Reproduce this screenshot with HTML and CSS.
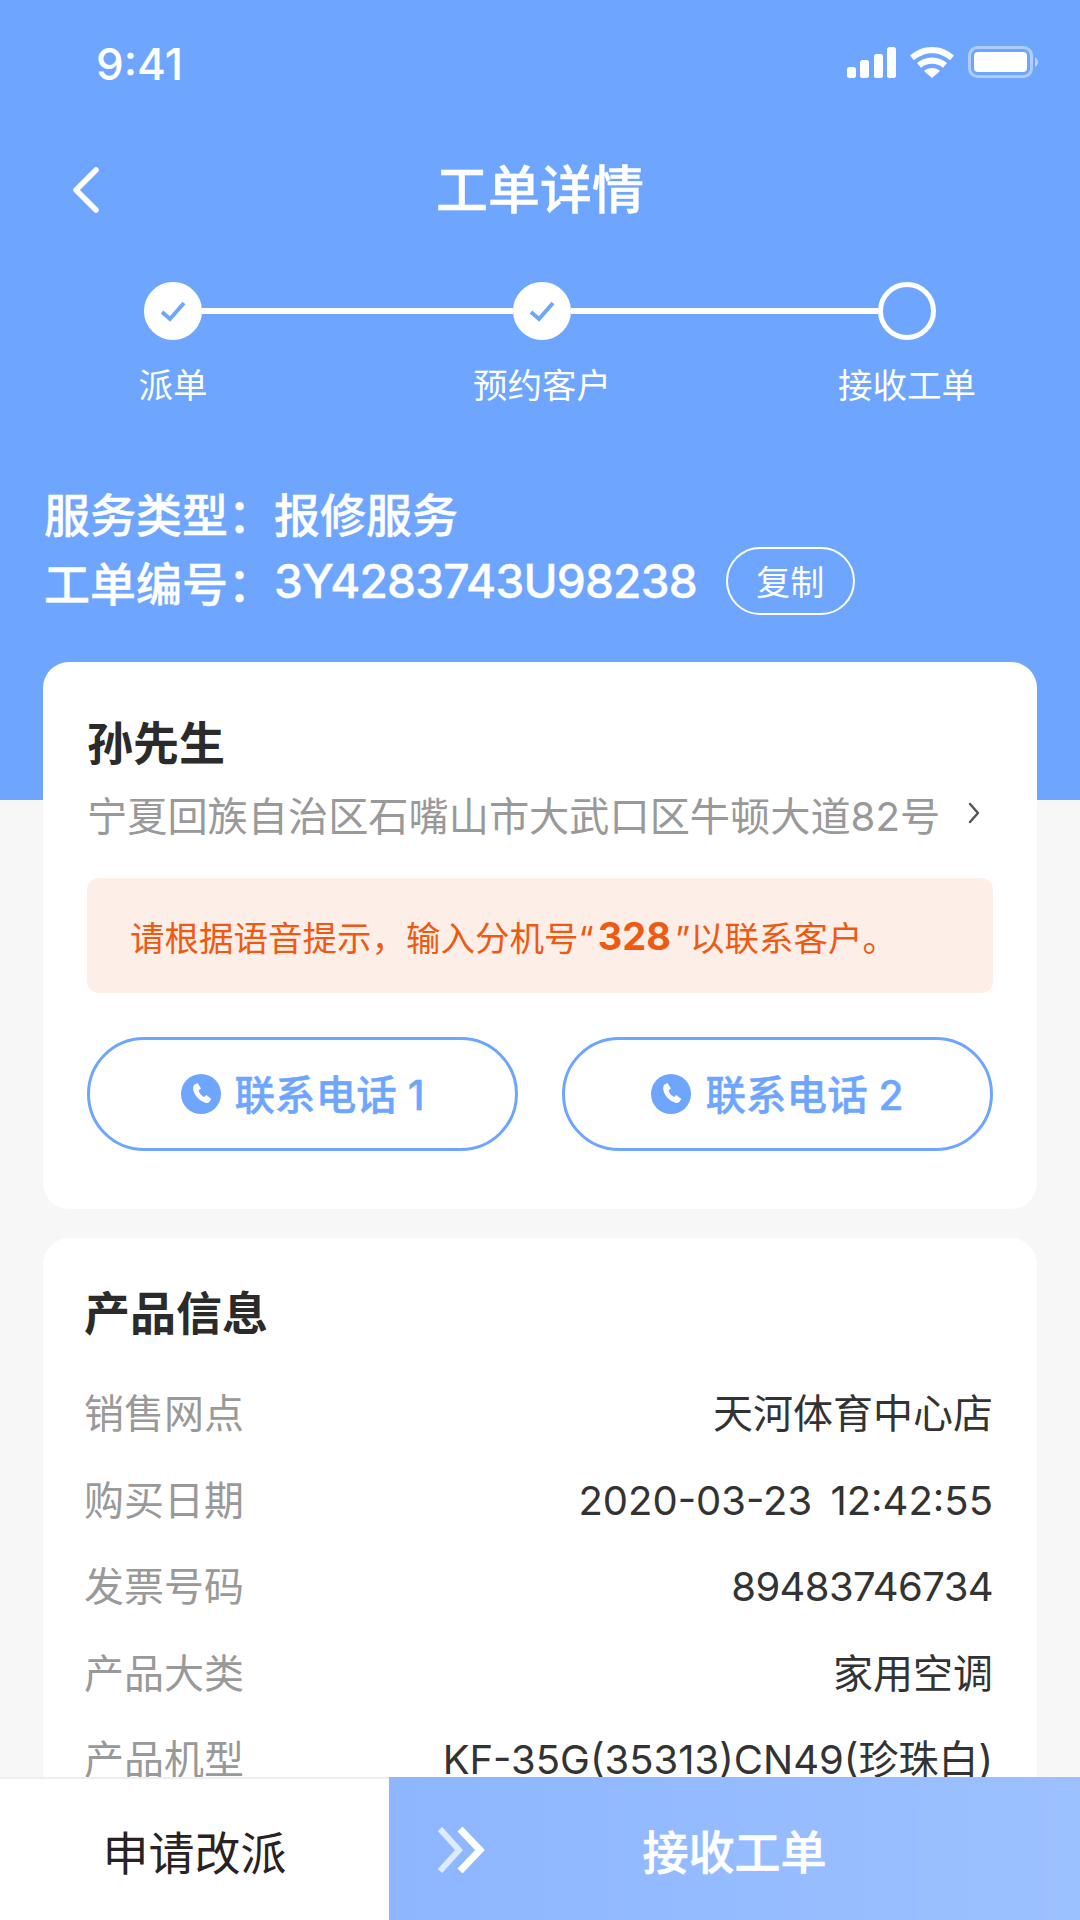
FILE: index.html
```html
<!DOCTYPE html>
<html lang="zh-CN">
<head>
  <meta charset="UTF-8">
  <title>工单详情</title>
  <link rel="stylesheet" href="styles.css">
</head>
<body>
<div class="page">
  <div class="status-bar">
    <span class="time">9:41</span>
    <div class="status-icons">
      <svg width="49" height="31" viewBox="0 0 49 31"><g fill="#fff"><rect x="0" y="20" width="9" height="11" rx="2.5"/><rect x="13" y="13" width="9" height="18" rx="2.5"/><rect x="27" y="7" width="9" height="24" rx="2.5"/><rect x="40" y="0" width="9" height="31" rx="2.5"/></g></svg>
      <svg width="44" height="31" viewBox="0 0 44 31"><g fill="#fff"><path d="M22 0C13.500 0 6 3.300 0 8.600l4 4.700C9 9 15.200 6.300 22 6.300s13 2.700 18 7l4-4.700C38 3.300 30.500 0 22 0z"/><path d="M22 10.500c-5.800 0-11 2.100-15 5.600l4 4.700c3-2.500 6.800-4 11-4s8 1.500 11 4l4-4.700c-4-3.500-9.200-5.600-15-5.600z"/><path d="M22 21c-3.100 0-5.900 1.100-8 3l8 7 8-7c-2.100-1.900-4.900-3-8-3z"/></g></svg>
      <svg width="70" height="32" viewBox="0 0 70 32"><rect x="1.500" y="1.500" width="62" height="29" rx="8" fill="none" stroke="#fff" stroke-opacity=".45" stroke-width="3"/><rect x="6" y="6" width="53" height="20" rx="4" fill="#fff"/><path d="M67 11c2 1 3 3 3 5s-1 4-3 5z" fill="#fff" fill-opacity=".5"/></svg>
    </div>
  </div>

  <div class="nav">
    <svg class="back" width="27" height="46" viewBox="0 0 27 46"><path d="M24 3L4 23l20 20" fill="none" stroke="#fff" stroke-width="5.500" stroke-linecap="round" stroke-linejoin="round"/></svg>
    <h1 class="nav-title">工单详情</h1>
  </div>

  <div class="steps">
    <span class="dot done"><svg width="30" height="24" viewBox="0 0 30 24"><path d="M4 13l8 7L26 4" fill="none" stroke="#6ea6ff" stroke-width="4"/></svg></span>
    <span class="line"></span>
    <span class="dot done"><svg width="30" height="24" viewBox="0 0 30 24"><path d="M4 13l8 7L26 4" fill="none" stroke="#6ea6ff" stroke-width="4"/></svg></span>
    <span class="line"></span>
    <span class="dot"></span>
    <span class="step-label col-1">派单</span>
    <span class="step-label col-3">预约客户</span>
    <span class="step-label col-5">接收工单</span>
  </div>

  <div class="order-info">
    <div class="order-row">服务类型&#xFF1A;报修服务</div>
    <div class="order-row">工单编号&#xFF1A;<span class="order-no">3Y4283743U98238</span><span class="copy-btn">复制</span></div>
  </div>

  <div class="card customer">
    <div class="card-title">孙先生</div>
    <div class="address">
      <span>宁夏回族自治区石嘴山市大武口区牛顿大道82号</span>
      <svg width="12" height="22" viewBox="0 0 12 22"><path d="M2 2l8 9-8 9" fill="none" stroke="#555" stroke-width="2.500" stroke-linecap="round" stroke-linejoin="round"/></svg>
    </div>
    <div class="notice">请根据语音提示&#xFF0C;输入分机号“<b>328</b>”以联系客户。</div>
    <div class="phones">
      <a class="phone-btn">
        <svg width="40" height="40" viewBox="0 0 40 40"><circle cx="20" cy="20" r="20" fill="#6ea6ff"/><path d="M13.500 10.500l3-1.500 3.500 5.500-2.500 2c.8 2.800 2.800 5.200 5.500 6.500l2.300-2 5 4-2 3c-1 1-2.500 1.200-4 .7-6-2-10.800-7-12-13-.3-2 .2-4 1.200-5.200z" fill="#fff"/></svg>
        联系电话 1
      </a>
      <a class="phone-btn">
        <svg width="40" height="40" viewBox="0 0 40 40"><circle cx="20" cy="20" r="20" fill="#6ea6ff"/><path d="M13.500 10.500l3-1.500 3.500 5.500-2.500 2c.8 2.800 2.800 5.200 5.500 6.500l2.300-2 5 4-2 3c-1 1-2.500 1.200-4 .7-6-2-10.800-7-12-13-.3-2 .2-4 1.200-5.200z" fill="#fff"/></svg>
        联系电话 2
      </a>
    </div>
  </div>

  <div class="card product">
    <div class="card-title">产品信息</div>
    <div class="info-row"><span class="info-label">销售网点</span><span>天河体育中心店</span></div>
    <div class="info-row"><span class="info-label">购买日期</span><span class="date">2020-03-23 12:42:55</span></div>
    <div class="info-row"><span class="info-label">发票号码</span><span class="digits">89483746734</span></div>
    <div class="info-row"><span class="info-label">产品大类</span><span>家用空调</span></div>
    <div class="info-row"><span class="info-label">产品机型</span><span>KF-35G(35313)CN49(珍珠白)</span></div>
  </div>

  <div class="action-bar">
    <div class="action-left">申请改派</div>
    <div class="action-right">
      <svg class="arrows" width="48" height="46" viewBox="0 0 48 46"><path d="M3 2l19 21L3 44" fill="none" stroke="#fff" stroke-opacity=".7" stroke-width="6"/><path d="M23 2l20 21-20 21" fill="none" stroke="#fff" stroke-width="7"/></svg>
      <span>接收工单</span>
    </div>
  </div>
</div>
</body>
</html>
```

FILE: styles.css
```css
* {
  box-sizing: border-box;
}
body {
  margin: 0;
  font-family: Inter, "Noto Sans CJK SC", sans-serif;
}
.page {
  position: relative;
  width: 1080px;
  height: 1920px;
  overflow: hidden;
  background: linear-gradient(#6ea6ff 800px, #f7f7f7 800px);
}
.status-bar {
  height: 128px;
  padding: 44px 42px 0 96px;
  display: flex;
  justify-content: space-between;
  align-items: flex-start;
  color: white;
}
.time {
  font-size: 44px;
  line-height: 40px;
  font-weight: 500;
}
.status-icons {
  display: flex;
  align-items: center;
  gap: 14px;
  margin-top: 2px;
}
.nav {
  height: 124px;
  position: relative;
  display: flex;
  align-items: center;
  justify-content: center;
}
.back {
  position: absolute;
  left: 72px;
  top: 39px;
}
.nav-title {
  margin: 0 0 7px;
  font-size: 52px;
  font-weight: 500;
  -webkit-text-stroke: 0.5px white;
  color: white;
}
.steps {
  margin-top: 30px;
  padding: 0 144px;
  display: grid;
  grid-template-columns: 58px 311px 58px 307px 58px;
  align-items: center;
  color: white;
}
.dot {
  width: 58px;
  height: 58px;
  border-radius: 50%;
  border: 5px solid white;
  display: flex;
  align-items: center;
  justify-content: center;
}
.dot.done {
  background-color: white;
}
.line {
  height: 6px;
  background-color: white;
}
.step-label {
  grid-row: 2;
  justify-self: center;
  white-space: nowrap;
  font-size: 34.500px;
  line-height: 50px;
  margin-top: 21px;
}
.col-1 { grid-column: 1; }
.col-3 { grid-column: 3; }
.col-5 { grid-column: 5; }
.order-info {
  margin-top: 66px;
  padding-left: 44px;
  color: white;
  font-size: 46px;
  font-weight: 500;
  -webkit-text-stroke: 0.4px white;
}
.order-row {
  height: 69px;
  display: flex;
  align-items: center;
}
.order-no {
  letter-spacing: -0.8px;
}
.copy-btn {
  margin-left: 29px;
  width: 129px;
  height: 68px;
  border: 2.500px solid white;
  border-radius: 34px;
  font-size: 34px;
  font-weight: 400;
  -webkit-text-stroke: 0;
  display: flex;
  align-items: center;
  justify-content: center;
}
.card {
  margin: 0 43px;
  background-color: white;
  border-radius: 26px;
}
.customer {
  margin-top: 47px;
  height: 547px;
  padding: 52px 44px 0;
}
.card-title {
  font-size: 46px;
  font-weight: bold;
  line-height: 58px;
  color: #2b2b2b;
}
.address {
  margin-top: 12px;
  height: 58px;
  display: flex;
  align-items: center;
  justify-content: space-between;
  padding-right: 13px;
  font-size: 40.200px;
  color: #999;
}
.notice {
  margin-top: 36px;
  height: 115px;
  padding-left: 43px;
  display: flex;
  align-items: center;
  background-color: #fdeee8;
  border-radius: 12px;
  color: #ee5a12;
  font-size: 34.500px;
  white-space: nowrap;
}
.notice b {
  font-size: 38px;
  margin: 0 4px;
}
.phones {
  margin-top: 44px;
  display: flex;
  gap: 44px;
}
.phone-btn {
  flex: 1;
  height: 114px;
  border: 3px solid #6ea6ff;
  border-radius: 57px;
  padding-bottom: 4px;
  display: flex;
  align-items: center;
  justify-content: center;
  gap: 14px;
  color: #6ea6ff;
  font-size: 40.600px;
  font-weight: 500;
  -webkit-text-stroke: 0.4px #6ea6ff;
}
.phone-btn svg {
  margin-top: 4px;
}
.product {
  margin-top: 29px;
  height: 700px;
  padding: 46px 44px 0 41px;
}
.product .card-title {
  margin-bottom: 29px;
}
.info-row {
  height: 86.500px;
  line-height: 86.500px;
  display: flex;
  align-items: baseline;
  justify-content: space-between;
  font-size: 40px;
  color: #333;
  white-space: nowrap;
}
.info-label {
  color: #999;
}
.date {
  word-spacing: 7px;
}
.digits {
  letter-spacing: -0.600px;
}
/* fixed over the list */
.action-bar {
  position: absolute;
  left: 0;
  right: 0;
  bottom: 0;
  height: 143px;
  display: flex;
}
.action-left {
  width: 389px;
  background-color: white;
  border-top: 2px solid #eee;
  display: flex;
  align-items: center;
  justify-content: center;
  font-size: 46px;
  color: #2a2222;
}
.action-right {
  flex: 1;
  position: relative;
  background: linear-gradient(90deg, #8db6ff, #9dc1ff);
  display: flex;
  align-items: center;
  justify-content: center;
  color: white;
  font-size: 46px;
  font-weight: 500;
  -webkit-text-stroke: 0.6px white;
}
.arrows {
  position: absolute;
  left: 48px;
  top: 50px;
}
```
